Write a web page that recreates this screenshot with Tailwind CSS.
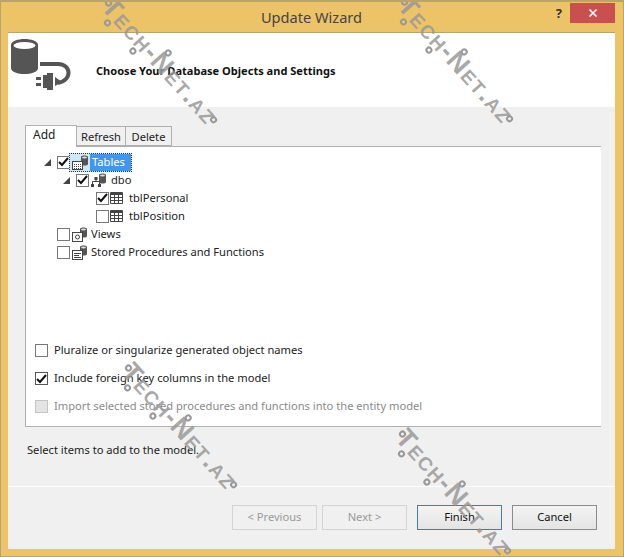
<!DOCTYPE html>
<html lang="en">
<head>
<meta charset="UTF-8" />
<title>Update Wizard</title>
<script src="https://cdn.jsdelivr.net/npm/@tailwindcss/browser@4"></script>
</head>
<body class="bg-white font-['Noto_Sans',sans-serif] text-[11.15px] text-[#222]">
<div class="relative w-[624px] h-[557px] overflow-hidden bg-[#edc367] border-t-2 border-x border-b border-[#b9a36f] pl-[7px] pr-[8px] pb-[7px] flex flex-col">
  <!-- Title bar -->
  <div class="h-[30px] shrink-0 flex relative">
    <div class="flex-1 text-center text-[14.6px] leading-[30px] text-[#444]">Update Wizard</div>
    <div class="absolute right-[53px] top-0 text-[13px] font-bold leading-[22px] text-[#333]">?</div>
    <div class="absolute right-0 top-[1px] w-[45px] h-[20px] bg-[#c9504f] flex items-center justify-center">
      <svg width="10" height="10" viewBox="0 0 10 10"><path d="M1.500 1.500l7 7M8.500 1.500l-7 7" stroke="#fff" stroke-width="1.600"/></svg>
    </div>
  </div>

  <div class="flex-1 flex flex-col bg-[#f0f0f0] border-t border-[#b9a36f]">
    <!-- Header -->
    <div class="h-[74px] shrink-0 bg-white flex">
      <svg class="ml-[3px] mt-[6px] shrink-0" width="62" height="52" viewBox="0 0 62 52">
        <path d="M0 6C0 2 7 0 13.500 0S27 2 27 6V29C27 33 20 35 13.500 35S0 33 0 29Z" fill="#555"/>
        <ellipse cx="13.500" cy="6.500" rx="11" ry="3.500" fill="#fff"/>
        <path d="M29 25H47C60 25 62 41 47 44" fill="none" stroke="#555" stroke-width="4"/>
        <path d="M32 36h4v-2h6v17h-6v-2h-4zM25 38h5v3h-5zM25 44h5v3h-5z" fill="#555"/>
        <path d="M44 38l7 5-7 4z" fill="#555"/>
      </svg>
      <div class="ml-[23px] mt-[28px] font-bold text-[11.05px] leading-[20px] text-[#111]">Choose Your Database Objects and Settings</div>
    </div>

    <!-- Tabs -->
    <div class="px-[17px] pt-[17px] flex-none">
      <div class="flex items-end h-[22px] text-[#222]">
        <div class="w-[52px] h-[22px] bg-white border border-b-0 border-[#b0b0b0] pl-[7px] text-[12px] leading-[18px] relative z-10 -mb-px">Add</div>
        <div class="w-[49px] h-[20px] bg-[#f0f0f0] border border-l-0 border-[#b0b0b0] text-center leading-[19px]">Refresh</div>
        <div class="w-[46px] h-[20px] bg-[#f0f0f0] border border-l-0 border-[#b0b0b0] text-center leading-[19px]">Delete</div>
      </div>
      <div class="h-[281px] w-[576px] bg-white border-t border-b border-l border-[#b0b0b0] relative">
        <!-- Tree -->
        <div class="h-[197px] pt-[6px] flex flex-col leading-[16px]">
          <div class="h-[18px] flex items-center pl-[18px]">
            <svg class="mr-[6px]" width="7" height="7" viewBox="0 0 7 7"><path d="M0 7L7 0V7Z" fill="#444"/></svg>
            <span class="w-[13px] h-[13px] border border-[#777] bg-white flex items-center justify-center"><svg width="11" height="10" viewBox="0 0 11 10"><path d="M1 5l3 3 6-7" fill="none" stroke="#111" stroke-width="2"/></svg></span>
            <span class="flex items-center h-[19px] border border-dotted border-[#333] ml-[-1px] bg-[#cde8fb]">
              <svg class="mx-[1px]" width="18" height="15" viewBox="0 0 18 15"><path d="M10 2C10 0 17 0 17 2V9C17 11 10 11 10 9Z" fill="#555"/><ellipse cx="13.500" cy="2.500" rx="2.500" ry="1" fill="#ddd"/><rect x="1.500" y="6.500" width="10" height="8" fill="#fff" stroke="#444"/><path d="M3 9.500h7M3 11.500h7M3 13.500h7" stroke="#444" stroke-dasharray="1 1"/></svg>
              <span class="bg-[#3f97ef] text-white h-[17px] leading-[16px] px-[2px] w-[41px]">Tables</span>
            </span>
          </div>
          <div class="h-[18px] flex items-center pl-[37px]">
            <svg class="mr-[6px]" width="7" height="7" viewBox="0 0 7 7"><path d="M0 7L7 0V7Z" fill="#444"/></svg>
            <span class="w-[13px] h-[13px] border border-[#777] bg-white flex items-center justify-center"><svg width="11" height="10" viewBox="0 0 11 10"><path d="M1 5l3 3 6-7" fill="none" stroke="#111" stroke-width="2"/></svg></span>
            <svg class="ml-[1px] mr-[4px]" width="17" height="15" viewBox="0 0 17 15"><path d="M9 2C9 0 16 0 16 2V9C16 11 9 11 9 9Z" fill="#555"/><ellipse cx="12.500" cy="2.500" rx="2.500" ry="1" fill="#ddd"/><path d="M2.500 11V8.500h7V11M6 6v2.500" fill="none" stroke="#444"/><rect x="1" y="11" width="3" height="3" fill="#444"/><rect x="8" y="11" width="3" height="3" fill="#444"/><rect x="4.500" y="4" width="3" height="3" fill="#444"/></svg>
            <span>dbo</span>
          </div>
          <div class="h-[18px] flex items-center pl-[70px]">
            <span class="w-[13px] h-[13px] border border-[#777] bg-white flex items-center justify-center"><svg width="11" height="10" viewBox="0 0 11 10"><path d="M1 5l3 3 6-7" fill="none" stroke="#111" stroke-width="2"/></svg></span>
            <svg class="ml-[1px] mr-[6px]" width="13" height="12" viewBox="0 0 13 12"><path d="M.5.500h12v11H.5z" fill="#fff" stroke="#444"/><path d="M0 1h13v2H0z" fill="#444"/><path d="M0 5.500h13M0 8.500h13M4.500 2v10M8.500 2v10" stroke="#444"/></svg>
            <span>tblPersonal</span>
          </div>
          <div class="h-[18px] flex items-center pl-[70px]">
            <span class="w-[13px] h-[13px] border border-[#777] bg-white"></span>
            <svg class="ml-[1px] mr-[6px]" width="13" height="12" viewBox="0 0 13 12"><path d="M.5.500h12v11H.5z" fill="#fff" stroke="#444"/><path d="M0 1h13v2H0z" fill="#444"/><path d="M0 5.500h13M0 8.500h13M4.500 2v10M8.500 2v10" stroke="#444"/></svg>
            <span>tblPosition</span>
          </div>
          <div class="h-[18px] flex items-center pl-[31px]">
            <span class="w-[13px] h-[13px] border border-[#777] bg-white"></span>
            <svg class="mr-[2px]" width="19" height="15" viewBox="0 0 19 15"><path d="M10 2C10 0 17 0 17 2V9C17 11 10 11 10 9Z" fill="#555"/><ellipse cx="13.500" cy="2.500" rx="2.500" ry="1" fill="#ddd"/><rect x="2.500" y="5.500" width="10" height="9" fill="#fff" stroke="#444"/><circle cx="7.500" cy="10" r="2" fill="none" stroke="#444"/></svg>
            <span>Views</span>
          </div>
          <div class="h-[18px] flex items-center pl-[31px]">
            <span class="w-[13px] h-[13px] border border-[#777] bg-white"></span>
            <svg class="mr-[2px]" width="19" height="15" viewBox="0 0 19 15"><path d="M10 2C10 0 17 0 17 2V9C17 11 10 11 10 9Z" fill="#555"/><ellipse cx="13.500" cy="2.500" rx="2.500" ry="1" fill="#ddd"/><rect x="2.500" y="5.500" width="10" height="9" fill="#fff" stroke="#444"/><path d="M4 8.500h7M4 10.500h5M4 12.500h7" stroke="#444"/></svg>
            <span>Stored Procedures and Functions</span>
          </div>
        </div>
        <!-- Options -->
        <div class="pl-[9px] flex flex-col gap-[15px]">
          <div class="h-[13px] flex items-center"><span class="w-[13px] h-[13px] border border-[#777] bg-white mr-[6px]"></span>Pluralize or singularize generated object names</div>
          <div class="h-[13px] flex items-center"><span class="w-[13px] h-[13px] border border-[#555] bg-white mr-[6px] flex items-center justify-center"><svg width="11" height="10" viewBox="0 0 11 10"><path d="M1 5l3 3 6-7" fill="none" stroke="#111" stroke-width="2"/></svg></span>Include foreign key columns in the model</div>
          <div class="h-[13px] flex items-center text-[#8a8a8a]"><span class="w-[13px] h-[13px] border border-[#c4c4c4] bg-[#e4e4e4] mr-[6px]"></span>Import selected stored procedures and functions into the entity model</div>
        </div>
      </div>
      <div class="mt-[14px] pl-[2px] leading-[18px]">Select items to add to the model.</div>
    </div>

    <!-- Footer -->
    <div class="mt-auto border-t border-white h-[63px] flex justify-end items-start pt-[18px] pr-[18px] bg-[#f0f0f0]">
      <div class="w-[85px] h-[25px] border border-[#d4d4d4] text-[#9a9a9a] flex items-center justify-center">&lt; Previous</div>
      <div class="w-[85px] h-[25px] border border-[#d4d4d4] text-[#9a9a9a] flex items-center justify-center ml-[5px]">Next &gt;</div>
      <div class="w-[85px] h-[25px] border border-[#3c7fb1] bg-gradient-to-b from-[#f4f4f4] to-[#e4e4e4] text-[#111] flex items-center justify-center ml-[10px]">Finish</div>
      <div class="w-[85px] h-[25px] border border-[#8c8c8c] bg-gradient-to-b from-[#f4f4f4] to-[#e4e4e4] text-[#111] flex items-center justify-center ml-[10px]">Cancel</div>
    </div>
  </div>

  <!-- Watermarks -->
  <div class="absolute left-[74px] top-[47px] w-[170px] h-[24px] rotate-[48deg] text-center text-[27px] leading-[24px] font-bold [font-variant-caps:small-caps] tracking-[1.5px] text-[#999]/85 font-['Liberation_Sans',sans-serif] pointer-events-none">Tech-Net.az
    <span class="absolute left-[4px] top-[8px] w-[7px] h-[7px] rounded-full border-2 border-[#999]"></span>
    <span class="absolute left-[18px] top-[22px] w-[7px] h-[7px] rounded-full border-2 border-[#999]"></span>
    <span class="absolute left-[56px] top-[22px] w-[7px] h-[7px] rounded-full border-2 border-[#999]"></span>
    <span class="absolute left-[81px] top-[-3px] w-[7px] h-[7px] rounded-full border-2 border-[#999]"></span>
    <span class="absolute left-[161px] top-[8px] w-[7px] h-[7px] rounded-full border-2 border-[#999]"></span>
  </div>
  <div class="absolute left-[370px] top-[46px] w-[170px] h-[24px] rotate-[48deg] text-center text-[27px] leading-[24px] font-bold [font-variant-caps:small-caps] tracking-[1.5px] text-[#999]/85 font-['Liberation_Sans',sans-serif] pointer-events-none">Tech-Net.az
    <span class="absolute left-[4px] top-[8px] w-[7px] h-[7px] rounded-full border-2 border-[#999]"></span>
    <span class="absolute left-[18px] top-[22px] w-[7px] h-[7px] rounded-full border-2 border-[#999]"></span>
    <span class="absolute left-[56px] top-[22px] w-[7px] h-[7px] rounded-full border-2 border-[#999]"></span>
    <span class="absolute left-[81px] top-[-3px] w-[7px] h-[7px] rounded-full border-2 border-[#999]"></span>
    <span class="absolute left-[161px] top-[8px] w-[7px] h-[7px] rounded-full border-2 border-[#999]"></span>
  </div>
  <div class="absolute left-[94px] top-[412px] w-[170px] h-[24px] rotate-[48deg] text-center text-[27px] leading-[24px] font-bold [font-variant-caps:small-caps] tracking-[1.5px] text-[#999]/85 font-['Liberation_Sans',sans-serif] pointer-events-none">Tech-Net.az
    <span class="absolute left-[4px] top-[8px] w-[7px] h-[7px] rounded-full border-2 border-[#999]"></span>
    <span class="absolute left-[18px] top-[22px] w-[7px] h-[7px] rounded-full border-2 border-[#999]"></span>
    <span class="absolute left-[56px] top-[22px] w-[7px] h-[7px] rounded-full border-2 border-[#999]"></span>
    <span class="absolute left-[81px] top-[-3px] w-[7px] h-[7px] rounded-full border-2 border-[#999]"></span>
    <span class="absolute left-[161px] top-[8px] w-[7px] h-[7px] rounded-full border-2 border-[#999]"></span>
  </div>
  <div class="absolute left-[368px] top-[478px] w-[170px] h-[24px] rotate-[48deg] text-center text-[27px] leading-[24px] font-bold [font-variant-caps:small-caps] tracking-[1.5px] text-[#999]/85 font-['Liberation_Sans',sans-serif] pointer-events-none">Tech-Net.az
    <span class="absolute left-[4px] top-[8px] w-[7px] h-[7px] rounded-full border-2 border-[#999]"></span>
    <span class="absolute left-[18px] top-[22px] w-[7px] h-[7px] rounded-full border-2 border-[#999]"></span>
    <span class="absolute left-[56px] top-[22px] w-[7px] h-[7px] rounded-full border-2 border-[#999]"></span>
    <span class="absolute left-[81px] top-[-3px] w-[7px] h-[7px] rounded-full border-2 border-[#999]"></span>
    <span class="absolute left-[161px] top-[8px] w-[7px] h-[7px] rounded-full border-2 border-[#999]"></span>
  </div>
</div>
</body>
</html>
